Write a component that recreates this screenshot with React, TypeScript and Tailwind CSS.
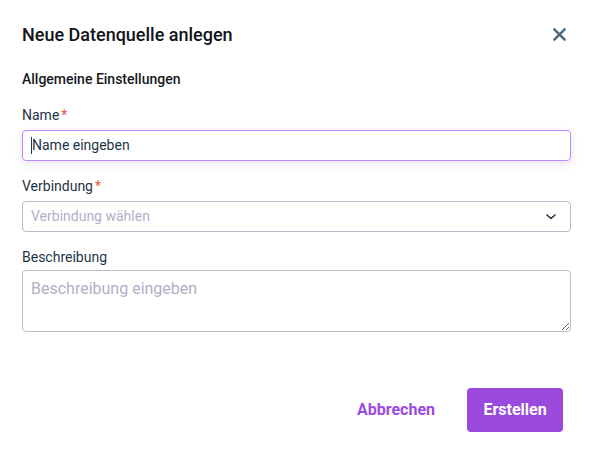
import React from "react";

export default function App() {
  return (
    <div className="w-[595px] h-[462px] bg-white font-['Roboto',sans-serif] pl-[22px] pr-[24px] pt-[20px]">
      {/* Header */}
      <div className="flex items-center justify-between h-7">
        <h2 className="text-[18px] font-medium text-[#111418]">Neue Datenquelle anlegen</h2>
        <button className="mr-[4px] text-[#4e6a80]">
          <svg width="15" height="15" viewBox="0 0 16 16" fill="none">
            <path d="M2.5 2.5 13.5 13.5M13.5 2.5 2.5 13.5" stroke="currentColor" strokeWidth="2.7" strokeLinecap="round" />
          </svg>
        </button>
      </div>

      <div className="mt-[21px] text-[14px] font-medium leading-5 text-[#15191e]">Allgemeine Einstellungen</div>

      {/* Name */}
      <label className="mt-4 flex text-[14px] leading-5 text-[#1e3547]">
        Name<span className="ml-[2px] text-[#e8572e]">*</span>
      </label>
      <div className="mt-[5px] flex h-[31px] items-center rounded-[4px] border border-[#c084fc] px-2 shadow-[0_3px_8px_rgba(90,90,140,0.15)]">
        <span className="h-[17px] w-px bg-[#1e3547]" />
        <span className="text-[14px] text-[#1e3547]">Name eingeben</span>
      </div>

      {/* Verbindung */}
      <label className="mt-[15px] flex text-[14px] leading-5 text-[#1e3547]">
        Verbindung<span className="ml-[2px] text-[#e8572e]">*</span>
      </label>
      <div className="mt-[5px] flex h-[31px] items-center justify-between rounded-[4px] border border-[#b9b8cc] pl-2 pr-[14px]">
        <span className="text-[14px] text-[#b1b0c6]">Verbindung wählen</span>
        <svg width="10" height="6" viewBox="0 0 10 6" fill="none">
          <path d="M1 1l4 3.5L9 1" stroke="#1e3547" strokeWidth="1.6" strokeLinecap="round" strokeLinejoin="round" />
        </svg>
      </div>

      {/* Beschreibung */}
      <label className="mt-[15px] block text-[14px] leading-5 text-[#1e3547]">Beschreibung</label>
      <textarea
        className="mt-[3px] block h-[62px] w-full rounded-[4px] border border-[#b9bfcc] px-2 py-[8px] text-[16px] leading-5 outline-none placeholder:text-[#b1b0c6]"
        placeholder="Beschreibung eingeben"
      />

      {/* Actions */}
      <div className="mt-[56px] flex items-center justify-end gap-[32px] pr-[8px]">
        <button className="text-[16px] font-bold text-[#9b4ae0]">Abbrechen</button>
        <button className="h-[44px] w-[96px] rounded-[4px] bg-[#994add] text-[16px] font-bold text-white">
          Erstellen
        </button>
      </div>
    </div>
  );
}
